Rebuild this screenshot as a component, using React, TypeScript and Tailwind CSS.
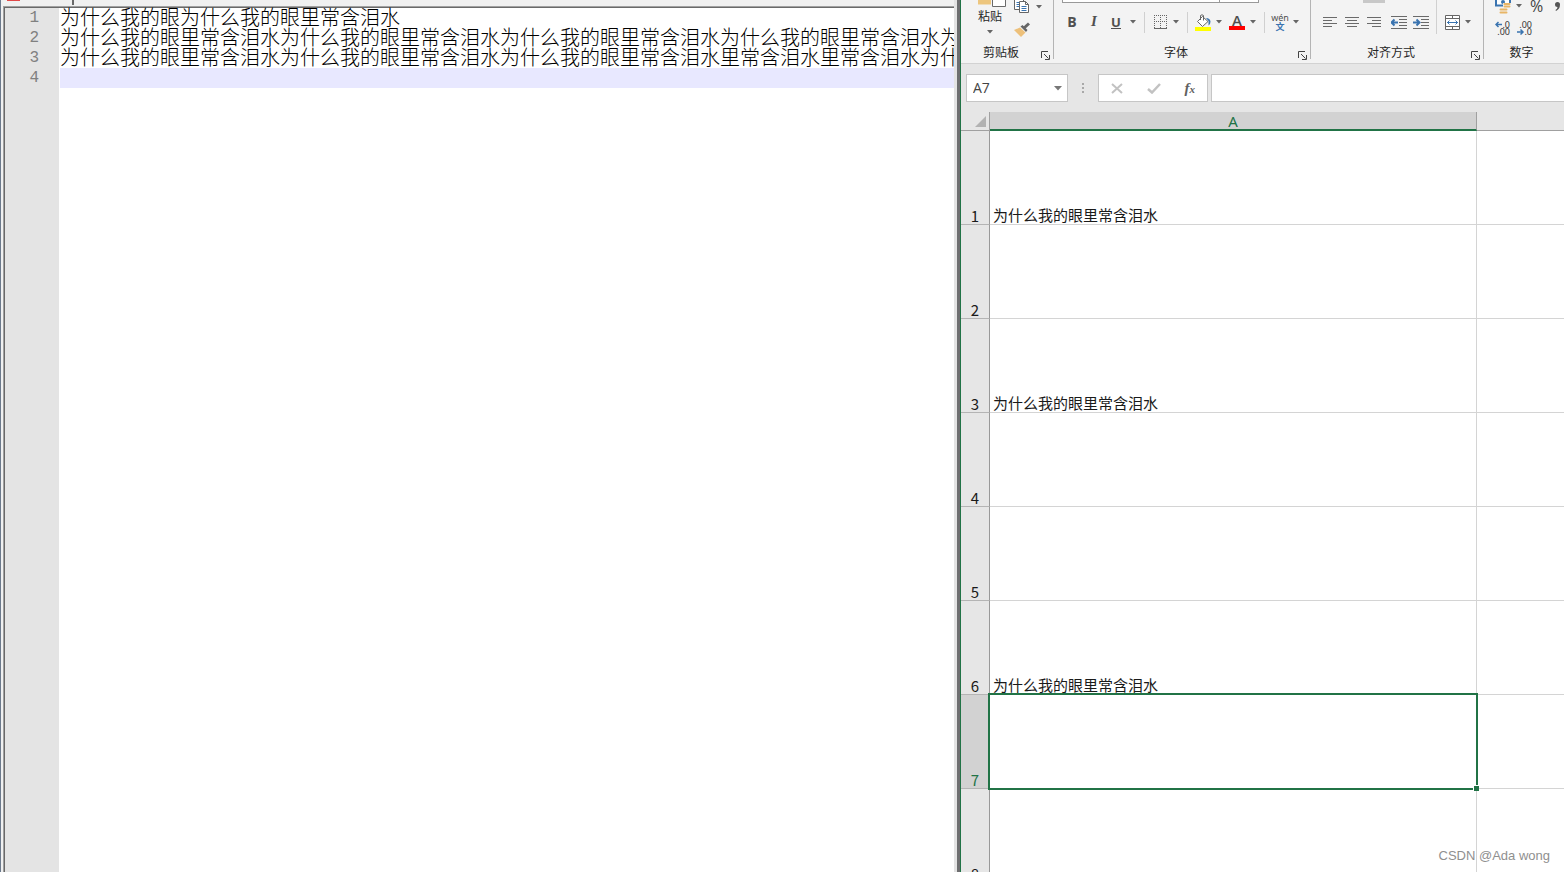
import type { ReactNode } from 'react';

const phrase = '为什么我的眼里常含泪水';

const editorLines = [
  '为什么我的眼' + phrase,
  phrase.repeat(4) + '为什么',
  phrase.repeat(3) + '里常含泪水里常含泪水为什么',
  '',
];

const sheetRows = [
  { id: 1, value: phrase },
  { id: 2, value: '' },
  { id: 3, value: phrase },
  { id: 4, value: '' },
  { id: 5, value: '' },
  { id: 6, value: phrase },
  { id: 7, value: '' },
  { id: 8, value: '' },
];

const activeRow = 7;

function Caret({ label }: { label: string }) {
  return (
    <button aria-label={label} className="flex w-2.5 shrink-0 justify-center">
      <svg width="6" height="4" viewBox="0 0 6 4">
        <path d="M0 0h6L3 3.5z" fill="#666" />
      </svg>
    </button>
  );
}

function Tool({ label, children }: { label: string; children: ReactNode }) {
  return (
    <button
      aria-label={label}
      className="flex h-6 w-[22px] shrink-0 items-center justify-center text-sm font-bold text-[#505050]"
    >
      {children}
    </button>
  );
}

function Separator() {
  return <div className="mr-1 ml-1.5 h-[21px] w-px shrink-0 bg-[#d0d0d0]" />;
}

function GroupDivider() {
  return <div className="h-[59px] w-px shrink-0 bg-[#b4b4b4]" />;
}

function GroupLabel({ text, launcher }: { text: string; launcher?: boolean }) {
  return (
    <div className="flex h-[18px] items-center pr-[3px] text-xs text-[#262626]">
      <span className={`flex-1 text-center ${launcher ? '' : 'pr-0.5'}`}>{text}</span>
      {launcher && (
        <button aria-label={`${text}设置`} className="mt-1.5">
          <svg width="9" height="9" viewBox="0 0 9 9" fill="none" stroke="#444">
            <path d="M.5 7V.5H7M3 3l4.5 4.5M8.5 4v4.5H4" />
          </svg>
        </button>
      )}
    </div>
  );
}

function LinesIcon({ d }: { d: string }) {
  return (
    <svg width="14" height="10" viewBox="0 0 14 10" stroke="#6a6a6a">
      <path d={d} />
    </svg>
  );
}

function IndentIcon({ increase }: { increase?: boolean }) {
  return (
    <svg width="16" height="13" viewBox="0 0 16 13" fill="none">
      <path d="M0 .5h16M8 3.5h8M8 6.5h8M8 9.5h8M0 12.5h16" stroke="#6a6a6a" />
      <path
        d={increase ? 'M0 6.5h6M3.5 3.5l3 3-3 3' : 'M7 6.5H1M3.5 3.5l-3 3 3 3'}
        stroke="#3a74b0"
        strokeWidth="2"
      />
    </svg>
  );
}

function DecimalIcon({ increase }: { increase?: boolean }) {
  return (
    <svg width="16" height="15" viewBox="0 0 16 15" className="font-['Noto_Sans',sans-serif]">
      <text x="15" y="7" textAnchor="end" fontSize="9" fill="#333">
        {increase ? '.0' : '.00'}
      </text>
      <text x="15" y="14" textAnchor="end" fontSize="9" fill="#333">
        {increase ? '.00' : '.0'}
      </text>
      <path
        d={increase ? 'M7 3.5H1M3.5 1L1 3.5 3.5 6' : 'M0 11h6M3.5 8.5L6 11l-2.5 2.5'}
        fill="none"
        stroke="#3a74b0"
        strokeWidth="1.5"
      />
    </svg>
  );
}

function ClipboardGroup() {
  return (
    <div className="flex w-[92px] shrink-0 flex-col">
      <div className="flex h-[43px] items-start pl-[13px]">
        <button className="flex w-8 flex-col items-center text-xs text-[#262626]">
          <svg width="28" height="7" viewBox="0 0 28 7" className="self-end">
            <path d="M0 0h13v4.5H0z" fill="#edc67e" />
            <path d="M14.5-1v7.5h13V-1" fill="#fff" stroke="#6a6a6a" />
          </svg>
          <span className="mt-px leading-4">粘贴</span>
          <svg width="6" height="4" viewBox="0 0 6 4" className="mt-1.5">
            <path d="M0 0h6L3 3.5z" fill="#666" />
          </svg>
        </button>
        <div className="ml-2 flex flex-col">
          <div className="flex items-center">
            <button aria-label="复制">
              <svg width="16" height="14" viewBox="0 0 16 14" fill="#fff" stroke="#666">
                <path d="M.5-2h7l2 2v9.5h-9z" />
                <path d="M2.5 2.5h4M2.5 4.5h3M2.5 6.5h3" stroke="#3a74b0" />
                <path d="M5.5 1.5h6l3 3v8h-9z" />
                <path d="M11.5 1.5v3h3" fill="none" />
                <path d="M7.5 6.5h5M7.5 8.5h5M7.5 10.5h5" stroke="#3a74b0" />
              </svg>
            </button>
            <div className="ml-1 flex">
              <Caret label="复制选项" />
            </div>
          </div>
          <button aria-label="格式刷" className="mt-2 self-start">
            <svg width="17" height="15" viewBox="0 0 17 15">
              <path d="M0 8l6-2.5 5.5 5L7 15z" fill="#edc07a" />
              <path d="M6.5 4.5l2-1.500 5 5-1.500 2z" fill="#666" />
              <path d="M10 6l5-4.500" stroke="#666" strokeWidth="3" />
            </svg>
          </button>
        </div>
      </div>
      <GroupLabel text="剪贴板" launcher />
    </div>
  );
}

function FontGroup() {
  return (
    <div className="flex w-64 shrink-0 flex-col">
      <div className="flex h-[3px] pl-2">
        <div className="w-[158px] border-x border-b border-[#999] bg-white" />
        <div className="w-[39px] border-r border-b border-[#999] bg-white" />
      </div>
      <div className="flex h-10 items-center pb-0.5 pl-[7px]">
        <Tool label="加粗">
          <span className="font-['Open_Sans','Noto_Sans',sans-serif] text-sm">B</span>
        </Tool>
        <Tool label="倾斜">
          <span className="font-['Liberation_Serif',serif] text-[15px] italic">I</span>
        </Tool>
        <Tool label="下划线">
          <span className="border-b border-[#505050] font-['Open_Sans','Noto_Sans',sans-serif] text-[13px] leading-3">
            U
          </span>
        </Tool>
        <div className="ml-px flex">
          <Caret label="下划线选项" />
        </div>
        <Separator />
        <Tool label="边框">
          <svg width="13" height="14" viewBox="0 0 13 14" fill="none" stroke="#666">
            <path d="M0 .5h13M0 6.5h13M.5 0v13M6.5 0v13M12.5 0v13" strokeDasharray="1 1" />
            <path d="M0 13.5h13" />
          </svg>
        </Tool>
        <Caret label="边框选项" />
        <Separator />
        <Tool label="填充颜色">
          <svg width="16" height="17" viewBox="0 0 16 17" fill="none">
            <path d="M2.5 7.5l5-5 5.5 5-5.5 5z" fill="#fff" stroke="#666" />
            <path d="M5.5 6V1.500q1.500-1.500 3 0v5" stroke="#666" />
            <path d="M11 4q4 0 4.500 3.500 0 3-2 4V7z" fill="#3a74b0" />
            <path d="M0 13h16v4H0z" fill="#ff0" />
          </svg>
        </Tool>
        <Caret label="填充颜色选项" />
        <div className="ml-0.5 flex items-center">
          <Tool label="字体颜色">
            <span className="flex w-4 flex-col items-center border-b-4 border-[#ff0000] font-['Open_Sans','Noto_Sans',sans-serif] text-[15px] leading-3 font-semibold">
              A
            </span>
          </Tool>
          <Caret label="字体颜色选项" />
        </div>
        <Separator />
        <Tool label="拼音指南">
          <span className="flex flex-col items-center font-normal">
            <span className="font-['Noto_Sans',sans-serif] text-[9px] leading-[9px]">wén</span>
            <span className="text-[9px] leading-[9px] font-bold text-[#3a74b0]">文</span>
          </span>
        </Tool>
        <Caret label="拼音选项" />
      </div>
      <GroupLabel text="字体" launcher />
    </div>
  );
}

function AlignGroup() {
  return (
    <div className="flex w-[172px] shrink-0 flex-col">
      <div className="h-[3px] pl-[52px]">
        <div className="h-full w-[22px] bg-[#c8c8c8]" />
      </div>
      <div className="flex h-10 items-center pb-0.5 pl-2">
        <Tool label="左对齐">
          <LinesIcon d="M0 .5h14M0 3.5h9M0 6.5h14M0 9.5h9" />
        </Tool>
        <Tool label="居中">
          <LinesIcon d="M0 .5h14M2 3.5h10M0 6.5h14M2 9.5h10" />
        </Tool>
        <Tool label="右对齐">
          <LinesIcon d="M0 .5h14M5 3.5h9M0 6.5h14M5 9.5h9" />
        </Tool>
        <div className="ml-[3px] flex">
          <Tool label="减少缩进量">
            <IndentIcon />
          </Tool>
          <Tool label="增加缩进量">
            <IndentIcon increase />
          </Tool>
        </div>
        <div className="-mt-[3px] mr-1 ml-1 h-[34px] w-px self-start bg-[#d0d0d0]" />
        <Tool label="合并后居中">
          <svg width="15" height="15" viewBox="0 0 15 15" fill="#fff" stroke="#666">
            <path d="M.5.5h14v14H.5zM.5 3.5h14M.5 11.5h14M7.500.5v3M7.500 11.500v3" />
            <path d="M2 7.500h11M4.500 5.500l-2 2 2 2M10.500 5.500l2 2-2 2" fill="none" stroke="#3a74b0" />
          </svg>
        </Tool>
        <Caret label="合并选项" />
      </div>
      <GroupLabel text="对齐方式" launcher />
    </div>
  );
}

function NumberGroup() {
  return (
    <div className="flex min-w-0 flex-1 flex-col overflow-hidden">
      <div className="flex h-[43px] flex-col">
        <div className="flex h-[15px] items-start pl-[11px]">
          <button aria-label="会计数字格式" className="shrink-0">
            <svg width="16" height="14" viewBox="0 0 16 14" fill="none">
              <path d="M1-1v6.500h14V-1" fill="#fff" stroke="#3a74b0" strokeWidth="2" />
              <circle cx="8" cy="2" r="2" fill="#3a74b0" />
              <path d="M8 3h8v6h-3v5H4V9h4z" fill="#f3f3f3" />
              <path d="M9.500 4h5M9.500 6.500h5M5.500 9.500h6M5.500 12.500h6" stroke="#e8b566" strokeWidth="2" strokeLinecap="round" />
            </svg>
          </button>
          <div className="mt-1 ml-[3px] flex">
            <Caret label="会计格式选项" />
          </div>
          <button className="ml-1.5 font-['Open_Sans','Noto_Sans',sans-serif] text-base leading-3 text-[#444]">
            %
          </button>
          <button aria-label="千位分隔样式" className="mt-0.5 ml-3 shrink-0">
            <svg width="5" height="9" viewBox="0 0 5 9" fill="#555">
              <path d="M0 2.500a2.500 2.500 0 0 1 5 0Q5 7 1 9l-.5-1Q2.500 7 2.500 5 0 5 0 2.500z" />
            </svg>
          </button>
        </div>
        <div className="mt-1.5 flex gap-1.5 pl-[11px]">
          <button aria-label="增加小数位数" className="shrink-0">
            <DecimalIcon increase />
          </button>
          <button aria-label="减少小数位数" className="shrink-0">
            <DecimalIcon />
          </button>
        </div>
      </div>
      <GroupLabel text="数字" />
    </div>
  );
}

function FormulaBar() {
  return (
    <div className="flex h-12 shrink-0 items-start gap-[3px] bg-[#e6e6e6] pt-2.5 pl-[5px]">
      <div className="flex h-7 w-[102px] shrink-0 items-center border border-[#c6c6c6] bg-white pr-[5px]">
        <input
          aria-label="名称框"
          defaultValue="A7"
          className="min-w-0 flex-1 pl-1.5 font-['Open_Sans','Noto_Sans',sans-serif] text-sm text-[#444] outline-none"
        />
        <button aria-label="名称列表">
          <svg width="8" height="5" viewBox="0 0 8 5">
            <path d="M0 0h8L4 4.500z" fill="#777" />
          </svg>
        </button>
      </div>
      <div className="flex h-7 w-6 shrink-0 items-center justify-center">
        <svg width="2" height="10" viewBox="0 0 2 10" fill="#a8a8a8">
          <path d="M0 0h2v2H0zM0 4h2v2H0zM0 8h2v2H0z" />
        </svg>
      </div>
      <div className="flex h-7 w-[110px] shrink-0 items-center justify-around border border-[#c6c6c6] bg-white">
        <button aria-label="取消">
          <svg width="12" height="11" viewBox="0 0 12 11" fill="none" stroke="#c2c2c2" strokeWidth="2">
            <path d="M1 1l10 9M11 1L1 10" />
          </svg>
        </button>
        <button aria-label="输入">
          <svg width="14" height="11" viewBox="0 0 14 11" fill="none" stroke="#c2c2c2" strokeWidth="2.500">
            <path d="M1 6l4 3.500L13 1" />
          </svg>
        </button>
        <button
          aria-label="插入函数"
          className="font-['Liberation_Serif',serif] text-[15px] leading-4 font-bold text-[#606060] italic"
        >
          f<span className="text-[11px]">x</span>
        </button>
      </div>
      <input
        aria-label="编辑栏"
        className="h-7 min-w-0 flex-1 border border-r-0 border-[#c6c6c6] bg-white px-2 outline-none"
      />
    </div>
  );
}

function Sheet() {
  return (
    <table className="w-full table-fixed border-separate border-spacing-0 text-[15px] leading-4 text-[#1a1a1a]">
      <colgroup>
        <col className="w-[29px]" />
        <col className="w-[487px]" />
        <col />
      </colgroup>
      <thead>
        <tr className="h-[19px]">
          <th className="border-r border-b border-[#a0a0a0] bg-[#e6e6e6] p-0">
            <svg width="11" height="11" viewBox="0 0 11 11" className="mr-[3px] ml-auto">
              <path d="M11 0v11H0z" fill="#b2b2b2" />
            </svg>
          </th>
          <th className="border-r border-b-2 border-r-[#a0a0a0] border-b-[#217346] bg-[#d2d2d2] p-0 font-['Noto_Sans',sans-serif] font-normal text-[#217346]">
            A
          </th>
          <th className="border-b border-[#a0a0a0] bg-[#e6e6e6] p-0" />
        </tr>
      </thead>
      <tbody>
        {sheetRows.map(({ id, value }) => {
          const active = id === activeRow;

          return (
            <tr key={id} className="h-[94px] align-bottom">
              <th
                scope="row"
                className={`border-r border-b border-r-[#999] border-b-[#b4b4b4] p-0 font-normal ${
                  active ? 'bg-[#d2d2d2] text-[#217346]' : 'bg-[#e6e6e6]'
                }`}
              >
                {id}
              </th>
              <td
                className={`border-r border-b border-[#d4d4d4] p-0 pb-px pl-[3px] ${active ? 'relative' : ''}`}
              >
                {value}
                {active && (
                  <>
                    <div className="absolute -inset-0.5 border-2 border-[#217346]" />
                    <div className="absolute -right-[3px] -bottom-[3px] size-1.5 border-t border-l border-white bg-[#217346]" />
                  </>
                )}
              </td>
              <td className="border-b border-[#d4d4d4] p-0" />
            </tr>
          );
        })}
      </tbody>
    </table>
  );
}

function Editor() {
  return (
    <section className="flex min-w-0 border-l border-[#6c7a8c] bg-[#f0f0f0]">
      <div className="ml-0.5 flex min-w-0 flex-1 flex-col">
        <div className="flex h-1.5 items-start">
          <div className="ml-1 h-px w-[13px] bg-[#e04848]" />
          <div className="ml-[52px] h-[5px] w-0.5 bg-[#696969]" />
        </div>
        <div className="flex min-h-0 flex-1 border-t border-l border-[#a0a0a0]">
          <div className="flex min-w-0 flex-1 border-t border-l border-[#696969] bg-white">
            <div className="w-[54px] shrink-0 bg-[#e4e4e4] pr-5 text-right font-['Liberation_Mono',monospace] text-base leading-5 text-[#808080]">
              {editorLines.map((_, i) => (
                <div key={i}>{i + 1}</div>
              ))}
            </div>
            <div className="ml-px min-w-0 flex-1 overflow-x-clip text-xl leading-[18px] font-light text-black">
              {editorLines.map((line, i) => (
                <div key={i} className={`h-5 whitespace-nowrap ${line ? '' : 'bg-[#e8e8ff]'}`}>
                  {line}
                </div>
              ))}
            </div>
          </div>
        </div>
      </div>
      <div className="w-[3px] shrink-0 bg-[#e3e3e3]" />
      <div className="w-[3px] shrink-0 bg-[#6e6e70]" />
    </section>
  );
}

export default function App() {
  return (
    <main className="relative grid h-screen grid-cols-[960fr_604fr] overflow-hidden bg-white font-['Noto_Sans_CJK_SC',sans-serif]">
      <Editor />
      <section className="flex min-w-0 flex-col overflow-hidden border-l border-[#217346]">
        <div className="flex h-16 shrink-0 border-b border-[#d2d2d2] bg-[#f3f3f3]">
          <ClipboardGroup />
          <GroupDivider />
          <FontGroup />
          <GroupDivider />
          <AlignGroup />
          <GroupDivider />
          <NumberGroup />
        </div>
        <FormulaBar />
        <Sheet />
      </section>
      <div className="absolute right-3.5 bottom-2 font-['Liberation_Sans',sans-serif] text-[13px] leading-4 text-[#8f8f8f]">
        CSDN @Ada wong
      </div>
    </main>
  );
}
